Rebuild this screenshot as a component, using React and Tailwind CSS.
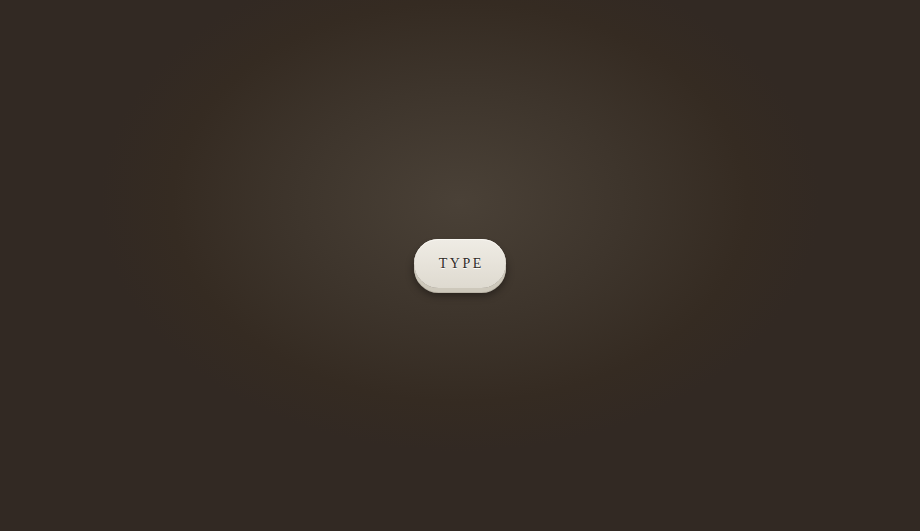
export default function App() {
  return (
    <div className="h-[531px] w-full flex items-center justify-center bg-[#322923] bg-[radial-gradient(ellipse_360px_250px_at_50%_38%,#4a4137_0%,#3e352c_45%,#352b22_80%,#322923_100%)]">
      {/* Type button */}
      <button className="mb-[5px] h-[49px] w-[92px] rounded-full bg-[linear-gradient(to_bottom,#efece5_0%,#e7e3da_50%,#dedad0_100%)] shadow-[inset_0_1px_0_#f8f6f1,0_4px_0_#cdc8bb,0_5px_0_#bbb5a8,0_7px_9px_rgba(0,0,0,0.45)] flex items-center justify-center pt-[1px]">
        <span className="font-[family-name:'Liberation_Serif',serif] font-normal text-[14px] leading-none tracking-[2.5px] pl-[2.5px] text-[#2e2a25] [text-shadow:0_1px_0_#ffffff]">
          TYPE
        </span>
      </button>
    </div>
  );
}
